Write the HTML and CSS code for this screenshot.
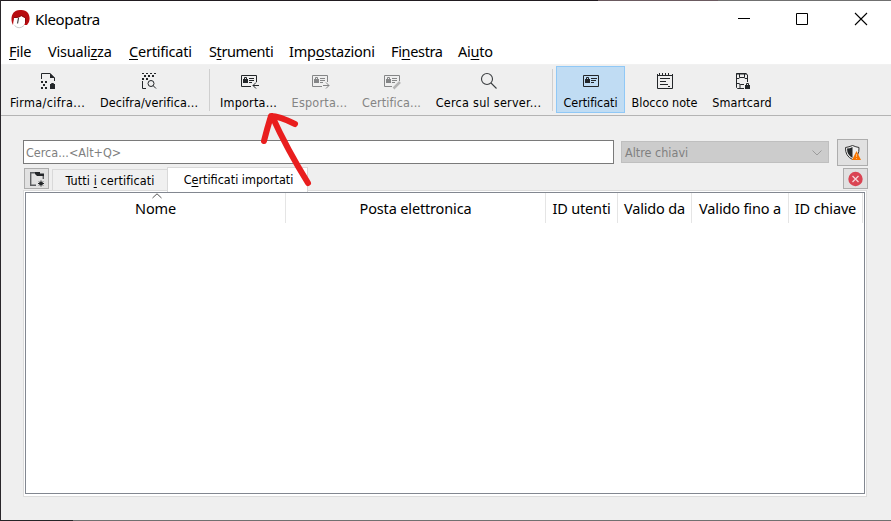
FILE: index.html
```html
<!DOCTYPE html>
<html lang="it">
<head>
<meta charset="utf-8">
<title>Kleopatra</title>
<link rel="stylesheet" href="styles.css">
</head>
<body>
<div class="window">
  <header class="titlebar">
    <svg class="logo" width="20" height="20" viewBox="0 0 20 20"><path d="M2 16C-1 11 0 1 9 1 17 0 20 7 18 13L16 16H12L6 14 3 11Z" fill="#b80c10"/><path d="M3 9Q8 9 10 7L14 9V14Q13 19 8 19 3 18 2.500 14Z" fill="#fff"/><path d="M3.500 16.500Q8 21 13 16.500" fill="none" stroke="#c9c9c9"/><path d="M7.500 9 6.500 14.500" stroke="#444" stroke-width="1.200"/><path d="M3 8.500Q8 9 10.500 6.500L14.500 9V14" stroke="#7d0a0c" fill="none" stroke-width=".8"/></svg>
    <span class="title">Kleopatra</span>
    <svg class="controls" width="130" height="14" viewBox="0 0 130 14" fill="none" stroke="#000"><path d="M0 6.500H12M58.500 1.500H69.500V12.500H58.500Z"/><path d="M117 1 129 13M129 1 117 13" stroke-width="1.100"/></svg>
  </header>
  <nav class="menubar">
    <span class="m1"><u>F</u>ile</span><span class="m2">Visuali<u>z</u>za</span><span class="m3"><u>C</u>ertificati</span><span class="m4">S<u>t</u>rumenti</span><span class="m5">Imp<u>o</u>stazioni</span><span class="m6">Fi<u>n</u>estra</span><span class="m7">Ai<u>u</u>to</span>
  </nav>
  <div class="toolbar">
    <div class="tool t1"><svg class="odd" width="18" height="18" viewBox="0 0 18 18"><path d="M2.500 7V1.500H11L15.500 6V9" fill="none" stroke="#232629"/><path d="M11 1V6H16ZM2 9h2v2H2zM6 9h2v2H6zM4 12h2v2H4zM2 15h2v2H2zM6 15h2v2H6zM11 12h5v5H11z" fill="#232629"/><path d="M12.500 13V11.500H14.500V13" fill="none" stroke="#232629"/></svg><span>Firma/cifra...</span></div>
    <div class="tool t2"><svg width="18" height="18" viewBox="0 0 18 18"><path d="M2 1h2v1H2zM6 1h2v1H6zM10 1h2v1h-2zM14 1h2v1h-2zM4 3h2v2H4zM8 3h2v2H8zM12 3h2v2h-2zM2 6h2v2H2zM6 6h2v2H6z" fill="#232629"/><path d="M6 16.500H2.500V9M13 13.500 16 16.500" fill="none" stroke="#232629"/><circle cx="11" cy="11.500" r="3" fill="none" stroke="#232629"/></svg><span>Decifra/verifica...</span></div>
    <i class="sep"></i>
    <div class="tool t3"><svg class="odd" width="20" height="18" viewBox="0 -1 20 18" fill="none" stroke="#232629"><path d="M12 13.500H2.500V2.500H17.500V9M10 5.500H15M10 7.500H15M10 9.500H13M20 12.500H14M17 9.500 14 12.500 17 15.500"/><path d="M4 6H9V10H4Z" fill="#232629" stroke="none"/><path d="M5.500 6.500V4.500H7.500V6.500"/></svg><span>Importa...</span></div>
    <div class="tool t3 off"><svg class="odd" width="20" height="18" viewBox="0 -1 20 18" fill="none" stroke="#858687"><path d="M12 13.500H2.500V2.500H17.500V9M10 5.500H15M10 7.500H15M10 9.500H13M13 12.500H19M16 9.500 19 12.500 16 15.500"/><path d="M4 6H9V10H4Z" fill="#858687" stroke="none"/><path d="M5.500 6.500V4.500H7.500V6.500"/></svg><span>Esporta...</span></div>
    <div class="tool t2 off"><svg class="odd" width="20" height="18" viewBox="0 -1 20 18" fill="none" stroke="#858687"><path d="M10 13.500H2.500V2.500H17.500V8M10 5.500H15M10 7.500H15M10 9.500H13"/><path d="M4 6H9V10H4Z" fill="#858687" stroke="none"/><path d="M5.500 6.500V4.500H7.500V6.500"/><path d="M11.500 15.500 18 9" stroke="#b4b4b4" stroke-width="2.500"/></svg><span>Certifica...</span></div>
    <div class="tool t4"><svg class="odd" width="18" height="18" viewBox="0 0 18 18" fill="none" stroke="#3b3e41" stroke-width="1.100"><circle cx="7" cy="7" r="5.500"/><path d="M11 11 16.500 16.500"/></svg><span>Cerca sul server...</span></div>
    <i class="sep second"></i>
    <div class="tool active"><svg class="odd" width="18" height="18" viewBox="0 0 18 18" fill="none" stroke="#232629"><path d="M1.500 3.500H16.500V14.500H1.500ZM9 6.500H15M9 8.500H14M9 10.500H12"/><path d="M3 7H8V11H3Z" fill="#232629" stroke="none"/><path d="M4.500 7.500V5.500H6.500V7.500"/></svg><span>Certificati</span></div>
    <div class="tool"><svg class="odd" width="18" height="18" viewBox="0 0 18 18" fill="none" stroke="#232629"><path d="M1.500 2V16.500H16.500V2M1 3.500H17M3.500 1V4M6.500 1V4M9.500 1V4M12.500 1V4M4 6.500H14M4 9.500H10M4 12.500H12M12 14.500H14"/></svg><span>Blocco note</span></div>
    <div class="tool t2"><svg width="18" height="18" viewBox="-1 0 18 18" fill="none" stroke="#232629"><path d="M10 16.500H3.500L2.500 15.500V1.500H12L13.500 3V10M2 2H13M5.500 2V5.500H10.500V2M2 6.500H5L6 5.500M14 6.500H11L10 5.500M2 11.500H5L6.500 12.500H10M6 12V16M2.500 9.500V12" /><path d="M11 13h5v4H11z" fill="#232629" stroke="none"/><path d="M12.500 13V11.500H14.500V13"/></svg><span>Smartcard</span></div>
  </div>
  <main>
    <div class="searchrow">
      <div class="search">Cerca...&lt;Alt+Q&gt;</div>
      <div class="combo"><span>Altre chiavi</span><svg width="10" height="6" viewBox="0 0 10 6" fill="none" stroke="#9b9b9b"><path d="M.5.5 5 5 9.500.5"/></svg></div>
      <div class="btn shield"><svg width="18" height="18" viewBox="0 0 18 18"><path d="M8.500 1.500Q12 3 15 3.500 15.500 12 8.500 15.500 1 12 1.500 3.500 5 3 8.500 1.500Z" fill="#eee" stroke="#333"/><path d="M8.500 3V14Q3 11 3 4.500 6 4.500 8.500 3Z" fill="#25282a"/><path d="M12.500 7 17 16H8Z" fill="#f67400"/><path d="M12.500 10V13M12.500 14V15" stroke="#ffb56b"/></svg></div>
    </div>
    <div class="tabrow">
      <div class="btn newtab"><svg width="18" height="18" viewBox="0 0 18 18"><path d="M8 15.300H2.700V2.700H7M15.300 5V9" fill="none" stroke="#5b5d60" stroke-width="1.400"/><path d="M7 2H12V3.500H16V6H9L7 4Z" fill="#232629"/><path d="M13 10.500V16.500M10 13.500H16M11 11.500 15 15.500M15 11.500 11 15.500" stroke="#232629"/><circle cx="13" cy="13.500" r="1.800" fill="#232629"/></svg></div>
      <div class="tab first"><span>Tutti <u>i</u> certificati</span></div>
      <div class="tab selected"><span>C<u>e</u>rtificati importati</span></div>
      <div class="btn close"><svg width="16" height="16" viewBox="0 0 16 16"><circle cx="7.500" cy="8" r="7.200" fill="#da4453"/><path d="M4.500 5 10.500 11M10.500 5 4.500 11" stroke="#f6d5d8" stroke-width="1.300"/></svg></div>
    </div>
    <div class="pane"><div class="list">
      <div class="head">
        <div><svg class="sort" width="10" height="6" viewBox="0 0 10 6" fill="none" stroke="#555"><path d="M.5 5 5 .8 9.500 5"/></svg><span>Nome</span></div><div><span>Posta elettronica</span></div><div><span>ID utenti</span></div><div><span>Valido da</span></div><div><span>Valido fino a</span></div><div><span>ID chiave</span></div>
      </div>
    </div></div>
  </main>
</div>
<svg class="arrow" width="60" height="90" viewBox="0 0 60 90" fill="none" stroke="#e91e1e" stroke-width="6" stroke-linecap="round" stroke-linejoin="round"><path d="M48 76Q27 42 12 9M4 34Q7 22 11 9Q19 9 35 17"/></svg>
</body>
</html>
```
FILE: styles.css
```css
* { box-sizing: border-box; }
body { margin: 0; width: 891px; height: 521px; overflow: hidden; background: #efefef; color: #000; font: 12.5px/16px "DejaVu Sans Condensed", "DejaVu Sans", sans-serif; }
u { text-decoration-thickness: 1px; text-underline-offset: 2px; }
.window { height: 521px; display: flex; flex-direction: column; border-left: 1px solid #29262a; background: linear-gradient(90deg, #211b20 597px, #6b5a60 597px 717px, #707070 717px) top / 100% 1px no-repeat, linear-gradient(90deg, #252427 72px, #707070 72px) bottom / 100% 1px no-repeat; padding: 1px 0; }
.titlebar { height: 37px; background: #fff; display: flex; align-items: center; padding: 0 23px 0 10px; font: 15px/20px "Noto Sans", sans-serif; }
.title { margin: -2px 0 0 4px; letter-spacing: -.35px; }
.logo { margin-top: -1px; }
.controls { margin: -1px 0 0 auto; }
.menubar { height: 27px; background: #fff; border-bottom: 1px solid #f1f1f1; padding: 3px 0 0 8px; display: flex; gap: 16px; font: 14.5px/21px "Noto Sans", sans-serif; letter-spacing: -.22px; white-space: nowrap; }
.m1 { width: 23px; } .m2 { width: 65px; } .m3 { width: 64px; } .m4 { width: 64px; letter-spacing: -.4px; } .m5 { width: 86px; } .m6 { width: 51px; letter-spacing: -.35px; } .m7 { width: 36px; }
.toolbar { height: 51px; border-bottom: 1px solid #b4b4b4; display: grid; grid-template-columns: 93px 110px 10px 69px 73px 71px 123px 6px 69px 79px 76px; white-space: nowrap; }
.tool { display: flex; flex-direction: column; align-items: center; padding-top: 7px; gap: 5px; }
.tool svg { flex: none; }
.odd { margin-left: 1px; }
.t1 { letter-spacing: .36px; }
.t2 { letter-spacing: .1px; }
.t3 { letter-spacing: .22px; }
.t4 { letter-spacing: .26px; }
.off { color: #848484; }
.active { height: 47px; margin-top: 1px; background: #c0dcf3; border: 1px solid #90c8f6; padding-top: 5px; letter-spacing: -.05px; }
.sep { width: 1px; height: 42px; margin: 4px 0 0 5px; background: #cfcfcf; }
.second { margin-left: 2px; }
main { flex: 1; padding: 23px 23px 0 22px; }
.searchrow { display: flex; height: 29px; }
.search { width: 591px; height: 24px; margin-top: 1px; border: 1px solid #7a7a7a; background: #fff; color: #808080; padding: 4px 2px; }
.combo { width: 208px; height: 22px; margin: 2px 0 0 7px; background: #ccc; border: 1px solid #bfbfbf; color: #808080; padding: 3px 6px 0 3px; display: flex; justify-content: space-between; }
.combo svg { margin-top: 5px; }
.btn { border: 1px solid #adadad; background: #e1e1e1; display: flex; align-items: center; justify-content: center; }
.shield { width: 31px; height: 27px; margin-left: 8px; }
.tabrow { display: flex; height: 22px; }
.newtab { width: 25px; height: 21px; margin-left: 1px; }
.tab { border: 1px solid #d9d9d9; border-bottom: 0; white-space: nowrap; text-align: center; }
.first { width: 116px; height: 21px; margin: 1px -1px 0 3px; padding-top: 3px; background: #f0f0f0; letter-spacing: .1px; }
.selected { width: 141px; height: 25px; margin-top: -1px; padding: 4px 0 0 2px; background: #fff; position: relative; z-index: 1; }
.close { width: 25px; height: 21px; margin-left: auto; }
.pane { width: 844px; height: 307px; border: 1px solid #dcdcdc; background: #fff; padding: 1px; }
.list { width: 840px; height: 302px; border: 1px solid #828790; background: #fff; position: relative; z-index: 2; }
.head { display: grid; grid-template-columns: 260px 260px 72px 74px 97px 74px; height: 30px; font: 14.5px/20px "Noto Sans", sans-serif; letter-spacing: -.15px; }
.head > div { border-right: 1px solid #e5e5e5; text-align: center; padding-top: 5px; position: relative; white-space: nowrap; }
.sort { position: absolute; left: 126px; top: 0; }
.arrow { position: absolute; left: 260px; top: 107px; z-index: 3; }
```
